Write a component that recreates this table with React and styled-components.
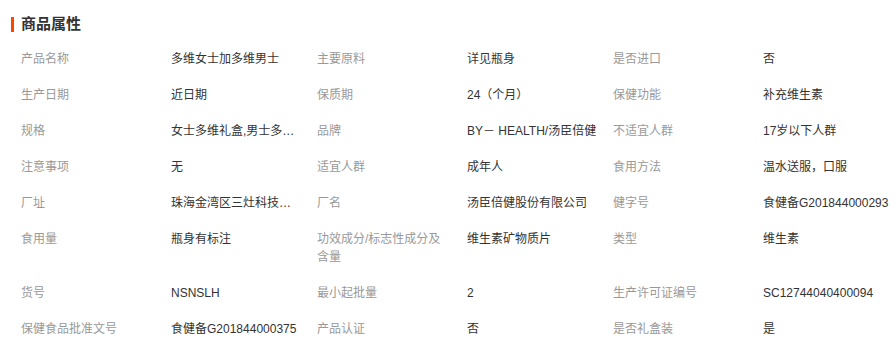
import React from "react";
import styled, { createGlobalStyle } from "styled-components";

const GlobalStyle = createGlobalStyle`
  html, body { margin: 0; padding: 0; background: #fff; }
  body { font-family: "Liberation Sans", "Noto Sans CJK SC", sans-serif; }
`;

const Panel = styled.section`
  width: 896px;
  background: #fff;
`;

const Title = styled.h2`
  display: flex;
  align-items: center;
  box-sizing: border-box;
  margin: 0;
  height: 40px;
  padding: 16px 0 8px 11px;
  font-size: 15px;
  font-weight: bold;
  color: #333;
  line-height: 16px;
  &::before {
    content: "";
    display: block;
    width: 3px;
    height: 15px;
    background: #ff4400;
    margin-right: 7px;
  }
`;

const Grid = styled.div`
  display: grid;
  grid-template-columns: 150px 146px 150px 146px 150px 146px;
  padding-left: 21px;
  padding-top: 1px;
  font-size: 12px;
  line-height: 18px;
`;

const Label = styled.div`
  padding: 9px 20px 9px 0;
  color: #999;
`;

const Value = styled.div`
  padding: 9px 16px 9px 0;
  color: #333;
  white-space: nowrap;
  overflow: hidden;
  text-overflow: ellipsis;
`;

const rows = [
  [["产品名称", "多维女士加多维男士"], ["主要原料", "详见瓶身"], ["是否进口", "否"]],
  [["生产日期", "近日期"], ["保质期", "24（个月）"], ["保健功能", "补充维生素"]],
  [["规格", "女士多维礼盒,男士多维礼盒"], ["品牌", "BY－ HEALTH/汤臣倍健"], ["不适宜人群", "17岁以下人群"]],
  [["注意事项", "无"], ["适宜人群", "成年人"], ["食用方法", "温水送服，口服"]],
  [["厂址", "珠海金湾区三灶科技工业园星汉路19号"], ["厂名", "汤臣倍健股份有限公司"], ["健字号", "食健备G201844000293"]],
  [["食用量", "瓶身有标注"], ["功效成分/标志性成分及含量", "维生素矿物质片"], ["类型", "维生素"]],
  [["货号", "NSNSLH"], ["最小起批量", "2"], ["生产许可证编号", "SC12744040400094"]],
  [["保健食品批准文号", "食健备G201844000375"], ["产品认证", "否"], ["是否礼盒装", "是"]],
];

export default function App() {
  return (
    <Panel>
      <GlobalStyle />
      <Title>商品属性</Title>
      <Grid>
        {rows.flat().map(([k, v], i) => (
          <React.Fragment key={i}>
            <Label>{k}</Label>
            <Value title={v}>{v}</Value>
          </React.Fragment>
        ))}
      </Grid>
    </Panel>
  );
}
